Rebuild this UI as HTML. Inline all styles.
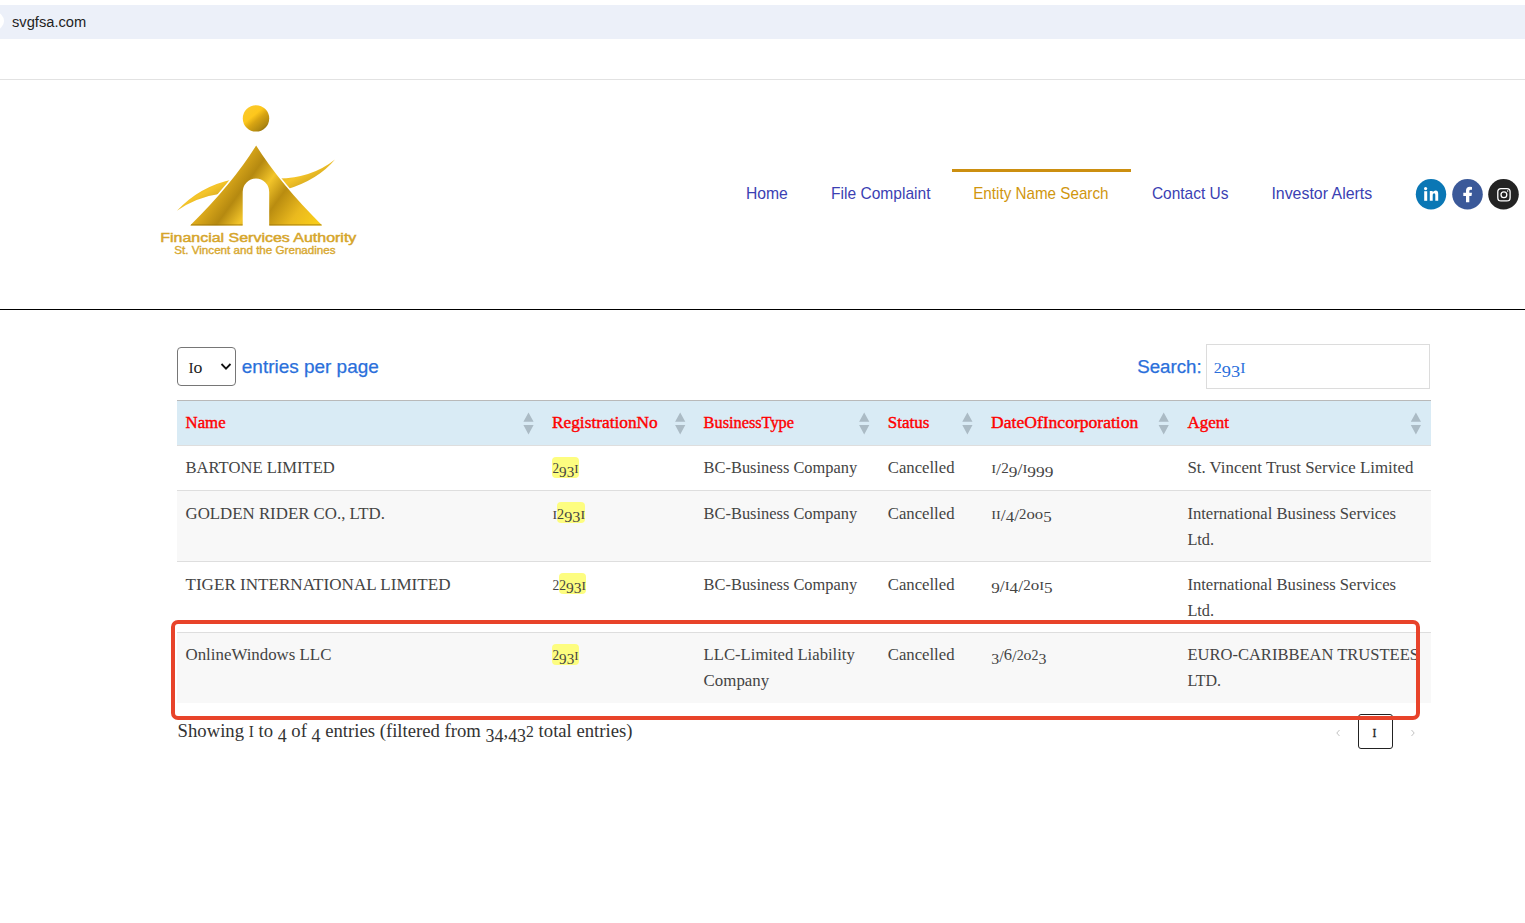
<!DOCTYPE html>
<html><head><meta charset="utf-8">
<style>
*{margin:0;padding:0;box-sizing:border-box}
html,body{width:1525px;height:923px;overflow:hidden;background:#fff;position:relative;font-family:"Liberation Sans",sans-serif}
.abs{position:absolute;white-space:nowrap}
.box{position:absolute}
#urlbar{position:absolute;left:0;top:5px;width:1525px;height:34px;background:#ecf0f9}
#url{left:12px;top:14px;font-size:14.7px;color:#1f1f1f;line-height:17px}
#hr1{position:absolute;left:0;top:79px;width:1525px;height:1px;background:#e2e2e2}
#hr2{position:absolute;left:0;top:309px;width:1525px;height:1px;background:#000}
.nv{font-family:"Liberation Sans",sans-serif;font-size:15.9px;fill:#3b3fb3}
.nav.active{color:#c8911a}
#bar{position:absolute;left:952px;top:169px;width:179px;height:3px;background:#cc8f10}
.soc{position:absolute;top:179px;width:31px;height:31px;border-radius:50%}
.hl{position:absolute;height:21px;background:#fdfd80;border-radius:4px}
svg text.b{font-family:"Liberation Serif",serif;font-size:16.2px;fill:#444}
svg text.h{font-family:"Liberation Serif",serif;font-size:16.6px;fill:#ff0000;stroke:#ff0000;stroke-width:0.4px}
svg text.info{font-family:"Liberation Serif",serif;font-size:19.6px;fill:#333}
svg text.s{font-family:"Liberation Sans",sans-serif;fill:#2a6fdb;stroke:#2a6fdb;stroke-width:0.25px}
</style></head><body>
<div id="urlbar"></div>
<div class="abs" id="url">svgfsa.com</div>
<div class="box" style="left:-14px;top:12px;width:18px;height:18px;border-radius:50%;background:#fff"></div>
<div id="hr1"></div>
<svg class="abs" style="left:0;top:0" width="400" height="280" viewBox="0 0 400 280">
<defs>
<linearGradient id="g1" gradientUnits="userSpaceOnUse" x1="200" y1="150" x2="310" y2="230">
<stop offset="0" stop-color="#d9a81a"/><stop offset="0.25" stop-color="#e6b21e"/><stop offset="0.42" stop-color="#b58910"/><stop offset="0.55" stop-color="#f3c52a"/><stop offset="0.68" stop-color="#b98c10"/><stop offset="0.85" stop-color="#eab91e"/><stop offset="1" stop-color="#f8cc1a"/>
</linearGradient>
<linearGradient id="g2" x1="0" y1="0" x2="1" y2="1">
<stop offset="0" stop-color="#c8980f"/><stop offset="0.45" stop-color="#f5c52a"/><stop offset="1" stop-color="#a98210"/>
</linearGradient>
<linearGradient id="g3" x1="0.15" y1="0.1" x2="0.85" y2="0.95">
<stop offset="0" stop-color="#fbc92a"/><stop offset="0.35" stop-color="#fdc71c"/><stop offset="0.55" stop-color="#d8a412"/><stop offset="0.85" stop-color="#b08810"/><stop offset="1" stop-color="#8a6a08"/>
</linearGradient>
</defs>
<circle cx="256" cy="118.4" r="13.2" fill="url(#g3)"/>
<path d="M176.9 210.8 Q200 186 233.5 179.2 L223 193.2 Q196 197 176.9 210.8 Z" fill="url(#g2)"/>
<path d="M278 178.6 Q312 178 335 159.5 Q318 180 285.5 189.8 Z" fill="url(#g2)"/>
<path d="M256.1 145.6 Q231.5 185 190.1 225.4 L242.7 225.4 L242.7 192 A13.25 13.5 0 0 1 269.2 192 L269.2 225.4 L322.2 225.4 Q281 185 256.1 145.6 Z" fill="none" stroke="#fff" stroke-width="3.2"/>
<path d="M256.1 145.6 Q231.5 185 190.1 225.4 L242.7 225.4 L242.7 192 A13.25 13.5 0 0 1 269.2 192 L269.2 225.4 L322.2 225.4 Q281 185 256.1 145.6 Z" fill="url(#g1)"/>
<path d="M191 224.9 H242.5 M269.4 224.9 H321.5" stroke="#9c760c" stroke-width="1" opacity="0.8"/>
<text x="160.3" y="241.9" font-family="Liberation Sans" font-size="12.4" fill="#d6a52a" stroke="#d6a52a" stroke-width="0.45" textLength="196" lengthAdjust="spacingAndGlyphs">Financial Services Authority</text>
<text x="174.3" y="253.7" font-family="Liberation Sans" font-size="10.3" fill="#d8a830" stroke="#d8a830" stroke-width="0.35" textLength="161.3" lengthAdjust="spacingAndGlyphs">St. Vincent and the Grenadines</text>
</svg>
<div id="bar"></div>
<svg class="abs" style="left:700px;top:170px" width="700" height="40" viewBox="700 170 700 40">
<text x="745.9" y="198.9" class="nv" textLength="41.9" lengthAdjust="spacingAndGlyphs">Home</text>
<text x="831" y="198.9" class="nv" textLength="99.5" lengthAdjust="spacingAndGlyphs">File Complaint</text>
<text x="973.2" y="198.9" class="nv" style="fill:#d0960e" textLength="135.3" lengthAdjust="spacingAndGlyphs">Entity Name Search</text>
<text x="1151.9" y="198.9" class="nv" textLength="76.6" lengthAdjust="spacingAndGlyphs">Contact Us</text>
<text x="1271.4" y="198.9" class="nv" textLength="100.8" lengthAdjust="spacingAndGlyphs">Investor Alerts</text>
</svg>
<svg class="abs" style="left:1400px;top:170px" width="125" height="50" viewBox="1400 170 125 50">
<circle cx="1431" cy="194.3" r="15.2" fill="#0a77b5"/>
<circle cx="1467.5" cy="194.3" r="15.3" fill="#3b5999"/>
<circle cx="1503.5" cy="194.3" r="15.3" fill="#232323"/>
<circle cx="1425.6" cy="188.6" r="1.6" fill="#fff"/>
<rect x="1424.2" y="191.2" width="3" height="9.6" fill="#fff"/>
<path d="M1429.8 200.8 V190.9 H1432.7 V192.3 Q1433.8 190.5 1435.8 190.5 Q1438.2 190.6 1438.2 193.8 V200.8 H1435.3 V194.8 Q1435.3 193.2 1434.1 193.2 Q1432.7 193.2 1432.7 195 V200.8 Z" fill="#fff"/>
<path d="M1466 202.2 V196 H1463.3 V192.7 H1466 V190.6 Q1466 186.8 1470 186.8 Q1471.3 186.8 1472 187 V189.8 H1470.8 Q1469.3 189.8 1469.3 191.1 V192.7 H1472 L1471.5 196 H1469.3 V202.2 Z" fill="#fff"/>
<rect x="1497.8" y="188.6" width="12.3" height="12.3" rx="3.2" fill="none" stroke="#fff" stroke-width="1.3"/>
<circle cx="1503.9" cy="194.8" r="2.9" fill="none" stroke="#fff" stroke-width="1.3"/>
<circle cx="1507.6" cy="191" r="0.75" fill="#fff"/>
</svg>
<div id="hr2"></div>

<!-- controls -->
<div class="box" style="left:177px;top:347px;width:59px;height:39px;border:1px solid #767676;border-radius:4px"></div>

<div class="box" style="left:1206px;top:344px;width:224px;height:45px;border:1px solid #dcdcdc"></div>

<!-- table -->
<div class="box" style="left:177px;top:400px;width:1254px;height:46px;background:#d9ebf5;border-top:1px solid #b9b9b9;border-bottom:1px solid #dedede"></div>
<div class="box" style="left:177px;top:490px;width:1254px;height:1px;background:#dedede"></div>
<div class="box" style="left:177px;top:491px;width:1254px;height:70px;background:#f8f8f8"></div>
<div class="box" style="left:177px;top:561px;width:1254px;height:1px;background:#dedede"></div>
<div class="box" style="left:177px;top:632px;width:1254px;height:1px;background:#dedede"></div>
<div class="box" style="left:177px;top:633px;width:1254px;height:70px;background:#f8f8f8"></div>
<div class="hl" style="left:551.8px;top:457px;width:27.2px"></div><div class="hl" style="left:557.4px;top:502px;width:27.9px"></div><div class="hl" style="left:559px;top:573px;width:27.3px"></div><div class="hl" style="left:552px;top:644px;width:27px"></div>
<svg class="abs" style="left:0;top:0" width="1525" height="923" viewBox="0 0 1525 923">
<path d="M528.5 412.5 L533.6 421.8 L523.4 421.8 Z M523.4 425 L533.6 425 L528.5 434.4 Z" fill="#abbbc5"/><path d="M680.2 412.5 L685.3000000000001 421.8 L675.1 421.8 Z M675.1 425 L685.3000000000001 425 L680.2 434.4 Z" fill="#abbbc5"/><path d="M864.2 412.5 L869.3000000000001 421.8 L859.1 421.8 Z M859.1 425 L869.3000000000001 425 L864.2 434.4 Z" fill="#abbbc5"/><path d="M967.4 412.5 L972.5 421.8 L962.3 421.8 Z M962.3 425 L972.5 425 L967.4 434.4 Z" fill="#abbbc5"/><path d="M1163.7 412.5 L1168.8 421.8 L1158.6000000000001 421.8 Z M1158.6000000000001 425 L1168.8 425 L1163.7 434.4 Z" fill="#abbbc5"/><path d="M1415.9 412.5 L1421.0 421.8 L1410.8000000000002 421.8 Z M1410.8000000000002 425 L1421.0 425 L1415.9 434.4 Z" fill="#abbbc5"/>
<text x="185.5" y="428" class="h" textLength="40.1" lengthAdjust="spacingAndGlyphs">Name</text><text x="552" y="428" class="h" textLength="105.7" lengthAdjust="spacingAndGlyphs">RegistrationNo</text><text x="703.6" y="428" class="h" textLength="90.4" lengthAdjust="spacingAndGlyphs">BusinessType</text><text x="887.8" y="428" class="h" textLength="41.7" lengthAdjust="spacingAndGlyphs">Status</text><text x="991.1" y="428" class="h" textLength="147.2" lengthAdjust="spacingAndGlyphs">DateOfIncorporation</text><text x="1187.5" y="428" class="h" textLength="41.6" lengthAdjust="spacingAndGlyphs">Agent</text><text x="185.5" y="473" class="b" textLength="149.3" lengthAdjust="spacingAndGlyphs">BARTONE LIMITED</text><text x="552.5" y="473" class="b" textLength="26.0" lengthAdjust="spacingAndGlyphs"><tspan style="font-size:13.61px">2</tspan><tspan dy="3.89" style="font-size:15.55px">93</tspan><tspan dy="-3.89" style="font-size:13.28px">I</tspan></text><text x="703.6" y="473" class="b" textLength="153.6" lengthAdjust="spacingAndGlyphs">BC-Business Company</text><text x="887.8" y="473" class="b" textLength="66.7" lengthAdjust="spacingAndGlyphs">Cancelled</text><text x="991.2" y="473" class="b" textLength="62.2" lengthAdjust="spacingAndGlyphs"><tspan style="font-size:13.28px">I</tspan><tspan dy="2.27">/</tspan><tspan dy="-2.27" style="font-size:13.61px">2</tspan><tspan dy="3.89" style="font-size:15.55px">9</tspan><tspan dy="-1.62">/</tspan><tspan dy="-2.27" style="font-size:13.28px">I</tspan><tspan dy="3.89" style="font-size:15.55px">999</tspan></text><text x="1187.4" y="473" class="b" textLength="226.0" lengthAdjust="spacingAndGlyphs">St. Vincent Trust Service Limited</text><text x="185.5" y="518.5" class="b" textLength="199.5" lengthAdjust="spacingAndGlyphs">GOLDEN RIDER CO., LTD.</text><text x="552.5" y="518.5" class="b" textLength="32.5" lengthAdjust="spacingAndGlyphs"><tspan style="font-size:13.28px">I</tspan><tspan style="font-size:13.61px">2</tspan><tspan dy="3.89" style="font-size:15.55px">93</tspan><tspan dy="-3.89" style="font-size:13.28px">I</tspan></text><text x="703.6" y="518.5" class="b" textLength="153.6" lengthAdjust="spacingAndGlyphs">BC-Business Company</text><text x="887.8" y="518.5" class="b" textLength="66.7" lengthAdjust="spacingAndGlyphs">Cancelled</text><text x="991.2" y="518.5" class="b" textLength="60.4" lengthAdjust="spacingAndGlyphs"><tspan style="font-size:13.28px">I</tspan><tspan style="font-size:13.28px">I</tspan><tspan dy="2.27">/</tspan><tspan dy="1.62" style="font-size:15.55px">4</tspan><tspan dy="-1.62">/</tspan><tspan dy="-2.27" style="font-size:13.61px">2</tspan><tspan style="font-size:15.39px">o</tspan><tspan style="font-size:15.39px">o</tspan><tspan dy="3.89" style="font-size:15.55px">5</tspan></text><text x="1187.4" y="518.5" class="b" textLength="208.7" lengthAdjust="spacingAndGlyphs">International Business Services</text><text x="1187.4" y="544.5" class="b" textLength="26.7" lengthAdjust="spacingAndGlyphs">Ltd.</text><text x="185.5" y="589.5" class="b" textLength="265.0" lengthAdjust="spacingAndGlyphs">TIGER INTERNATIONAL LIMITED</text><text x="552.5" y="589.5" class="b" textLength="33.5" lengthAdjust="spacingAndGlyphs"><tspan style="font-size:13.61px">2</tspan><tspan style="font-size:13.61px">2</tspan><tspan dy="3.89" style="font-size:15.55px">93</tspan><tspan dy="-3.89" style="font-size:13.28px">I</tspan></text><text x="703.6" y="589.5" class="b" textLength="153.6" lengthAdjust="spacingAndGlyphs">BC-Business Company</text><text x="887.8" y="589.5" class="b" textLength="66.7" lengthAdjust="spacingAndGlyphs">Cancelled</text><text x="991.2" y="589.5" class="b" textLength="61.4" lengthAdjust="spacingAndGlyphs"><tspan dy="3.89" style="font-size:15.55px">9</tspan><tspan dy="-1.62">/</tspan><tspan dy="-2.27" style="font-size:13.28px">I</tspan><tspan dy="3.89" style="font-size:15.55px">4</tspan><tspan dy="-1.62">/</tspan><tspan dy="-2.27" style="font-size:13.61px">2</tspan><tspan style="font-size:15.39px">o</tspan><tspan style="font-size:13.28px">I</tspan><tspan dy="3.89" style="font-size:15.55px">5</tspan></text><text x="1187.4" y="589.5" class="b" textLength="208.7" lengthAdjust="spacingAndGlyphs">International Business Services</text><text x="1187.4" y="615.5" class="b" textLength="26.7" lengthAdjust="spacingAndGlyphs">Ltd.</text><text x="185.5" y="660" class="b" textLength="145.9" lengthAdjust="spacingAndGlyphs">OnlineWindows LLC</text><text x="552.5" y="660" class="b" textLength="26.0" lengthAdjust="spacingAndGlyphs"><tspan style="font-size:13.61px">2</tspan><tspan dy="3.89" style="font-size:15.55px">93</tspan><tspan dy="-3.89" style="font-size:13.28px">I</tspan></text><text x="703.6" y="660" class="b" textLength="151.2" lengthAdjust="spacingAndGlyphs">LLC-Limited Liability</text><text x="887.8" y="660" class="b" textLength="66.7" lengthAdjust="spacingAndGlyphs">Cancelled</text><text x="991.2" y="660" class="b" textLength="55.2" lengthAdjust="spacingAndGlyphs"><tspan dy="3.89" style="font-size:15.55px">3</tspan><tspan dy="-1.62">/</tspan><tspan dy="-2.27" style="font-size:16.2px">6</tspan><tspan dy="2.27">/</tspan><tspan dy="-2.27" style="font-size:13.61px">2</tspan><tspan style="font-size:15.39px">o</tspan><tspan style="font-size:13.61px">2</tspan><tspan dy="3.89" style="font-size:15.55px">3</tspan></text><text x="1187.4" y="660" class="b" textLength="231.6" lengthAdjust="spacingAndGlyphs">EURO-CARIBBEAN TRUSTEES</text><text x="703.6" y="686" class="b" textLength="65.6" lengthAdjust="spacingAndGlyphs">Company</text><text x="1187.4" y="686" class="b" textLength="33.6" lengthAdjust="spacingAndGlyphs">LTD.</text><text x="177.6" y="737" class="info" textLength="454.9" lengthAdjust="spacingAndGlyphs">Showing <tspan style="font-size:16.07px">I</tspan> to <tspan dy="4.7" style="font-size:18.82px">4</tspan><tspan dy="-4.7"> of </tspan><tspan dy="4.7" style="font-size:18.82px">4</tspan><tspan dy="-4.7"> entries (filtered from </tspan><tspan dy="4.7" style="font-size:18.82px">34</tspan><tspan dy="-4.7">,</tspan><tspan dy="4.7" style="font-size:18.82px">43</tspan><tspan dy="-4.7" style="font-size:16.46px">2</tspan> total entries)</text>
<text x="241.8" y="373" class="s" style="font-size:19px" textLength="137" lengthAdjust="spacingAndGlyphs">entries per page</text>
<text x="1137.2" y="373.2" class="s" style="font-size:18px" textLength="64.5" lengthAdjust="spacingAndGlyphs">Search:</text>
<text x="1213.8" y="373" style="font-family:'Liberation Serif';font-size:18.5px;fill:#2a6fdb" textLength="31.7" lengthAdjust="spacingAndGlyphs"><tspan style="font-size:15.54px">2</tspan><tspan dy="4.44" style="font-size:17.76px">93</tspan><tspan dy="-4.44" style="font-size:15.17px">I</tspan></text>
<text x="188.5" y="373.2" style="font-family:'Liberation Serif';font-size:16.5px;fill:#222" textLength="14" lengthAdjust="spacingAndGlyphs"><tspan style="font-size:13.53px">I</tspan><tspan style="font-size:15.67px">o</tspan></text>
<path d="M221.5 364 L226 368.6 L230.5 364" fill="none" stroke="#111" stroke-width="1.8"/>
<text x="1372.6" y="737.2" style="font-family:'Liberation Serif';font-size:11.6px;fill:#222;stroke:#222;stroke-width:0.3">I</text>
<path d="M1339.5 730 L1336.8 733 L1339.5 736" fill="none" stroke="#bbb" stroke-width="0.9"/>
<path d="M1411.5 730 L1414.2 733 L1411.5 736" fill="none" stroke="#bbb" stroke-width="0.9"/>
</svg>
<div class="box" style="left:1358px;top:714px;width:35px;height:35px;border:1px solid #222;border-radius:3px"></div>
<div class="box" style="left:171px;top:620px;width:1249px;height:100px;border:4px solid #e8432a;border-radius:7px"></div>
</body></html>
